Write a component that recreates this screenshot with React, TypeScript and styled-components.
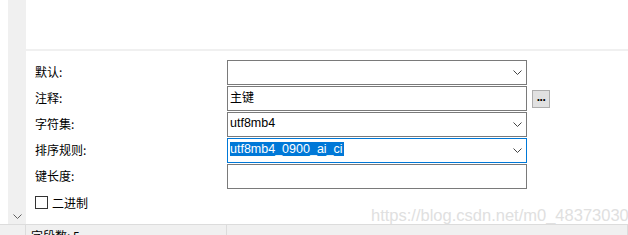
import * as React from "react";
import styled, { createGlobalStyle } from "styled-components";

const GlobalStyle = createGlobalStyle`
    html, body {
        margin: 0;
        padding: 0;
        background: #ffffff;
    }
    body {
        font-family: "Noto Sans CJK SC", "Liberation Sans", sans-serif;
        font-size: 12px;
        color: #000;
    }
`;

const Window = styled.div`
    position: relative;
    width: 628px;
    height: 235px;
    overflow: hidden;
    display: flex;
    flex-direction: column;
    background: #fff;
`;

const Main = styled.div`
    display: flex;
    height: 224px;
    flex-shrink: 0;
`;

const Gutter = styled.div`
    width: 8px;
    flex-shrink: 0;
    background: #fff;
`;

const Strip = styled.div`
    width: 18px;
    flex-shrink: 0;
    background: #f0f0f0;
    display: flex;
    flex-direction: column;
    justify-content: flex-end;
    align-items: center;
    padding-bottom: 5px;
    box-sizing: border-box;
`;

const Body = styled.div`
    flex: 1;
    display: flex;
    flex-direction: column;
`;

const TopPane = styled.div`
    height: 49px;
    background: #fff;
`;

const Separator = styled.div`
    height: 2px;
    background: #f0f0f0;
`;

const Form = styled.div`
    display: flex;
    flex-direction: column;
    gap: 1px;
    padding: 9px 0 0 9px;
`;

const Row = styled.div`
    display: flex;
    align-items: center;
    height: 25px;
`;

const Label = styled.div`
    width: 192px;
    font-size: 12px;
    line-height: 16px;
    padding-bottom: 1px;
`;

const Field = styled.div<{ $focused?: boolean }>`
    width: 300px;
    height: 25px;
    box-sizing: border-box;
    border: 1px solid ${(p) => (p.$focused ? "#0078d7" : "#7a7a7a")};
    display: flex;
    align-items: center;
    padding: 0 4px 3px 2px;
    background: #fff;
`;

const Value = styled.span<{ $selected?: boolean }>`
    flex: 1;
    font-family: "Liberation Sans", "Noto Sans CJK SC", sans-serif;
    font-size: 12.5px;
    line-height: 18px;
    white-space: nowrap;

    & > em {
        font-style: normal;
        background: ${(p) => (p.$selected ? "#0078d7" : "transparent")};
        color: ${(p) => (p.$selected ? "#fff" : "#000")};
        padding-right: 1px;
    }
`;

const CjkValue = styled.span`
    flex: 1;
    font-family: "Noto Sans CJK SC", sans-serif;
    font-size: 12px;
    line-height: 18px;
`;

const Chevron = styled.svg`
    width: 9px;
    height: 5px;
    flex-shrink: 0;
    margin-top: 3px;
`;

const DotsButton = styled.button`
    width: 18px;
    height: 18px;
    margin-left: 5px;
    box-sizing: border-box;
    border: 1px solid #adadad;
    background: #e1e1e1;
    padding: 0 0 4px 0;
    font-family: "Liberation Sans", sans-serif;
    font-size: 12px;
    font-weight: bold;
    letter-spacing: -0.5px;
    line-height: 12px;
    color: #000;
    display: flex;
    align-items: flex-end;
    justify-content: center;
`;

const CheckRow = styled.label`
    display: flex;
    align-items: center;
    height: 25px;
    gap: 4px;
    font-size: 12px;
`;

const CheckBox = styled.span`
    width: 13px;
    height: 13px;
    box-sizing: border-box;
    border: 1px solid #333;
    background: #fff;
`;

const StatusBar = styled.div`
    flex: 1;
    display: flex;
    background: #f0f0f0;
    border-top: 1px solid #dcdcdc;
`;

const StatusCell = styled.div<{ $w?: number }>`
    width: ${(p) => (p.$w ? `${p.$w}px` : "auto")};
    flex: ${(p) => (p.$w ? "none" : "1")};
    border-right: 1px solid #dcdcdc;
    box-sizing: border-box;
    padding: 3px 0 0 5px;
    font-size: 12px;
    line-height: 16px;
    white-space: nowrap;
`;

const Watermark = styled.div`
    position: absolute;
    left: 371px;
    top: 206px;
    font-family: "Liberation Sans", sans-serif;
    font-size: 16.5px;
    color: #e0e0e0;
    white-space: nowrap;
    pointer-events: none;
`;

const Down = ({ color = "#444" }: { color?: string }) => (
    <Chevron viewBox="0 0 9 5">
        <polyline points="0.5,0.5 4.5,4.5 8.5,0.5" fill="none" stroke={color} strokeWidth="1" />
    </Chevron>
);

export default function App() {
    return <Window>
        <GlobalStyle />
        <Main>
            <Gutter />
            <Strip>
                <Down color="#606060" />
            </Strip>
            <Body>
                <TopPane />
                <Separator />
                <Form>
                    <Row>
                        <Label>默认:</Label>
                        <Field><Value /><Down /></Field>
                    </Row>
                    <Row>
                        <Label>注释:</Label>
                        <Field><CjkValue>主键</CjkValue></Field>
                        <DotsButton>...</DotsButton>
                    </Row>
                    <Row>
                        <Label>字符集:</Label>
                        <Field><Value><em>utf8mb4</em></Value><Down /></Field>
                    </Row>
                    <Row>
                        <Label>排序规则:</Label>
                        <Field $focused><Value $selected><em>utf8mb4_0900_ai_ci</em></Value><Down /></Field>
                    </Row>
                    <Row>
                        <Label>键长度:</Label>
                        <Field><Value /></Field>
                    </Row>
                    <CheckRow>
                        <CheckBox />
                        二进制
                    </CheckRow>
                </Form>
            </Body>
        </Main>
        <StatusBar>
            <StatusCell $w={26} />
            <StatusCell $w={201}>字段数: 5</StatusCell>
            <StatusCell />
        </StatusBar>
        <Watermark>https://blog.csdn.net/m0_48373030</Watermark>
    </Window>;
}
